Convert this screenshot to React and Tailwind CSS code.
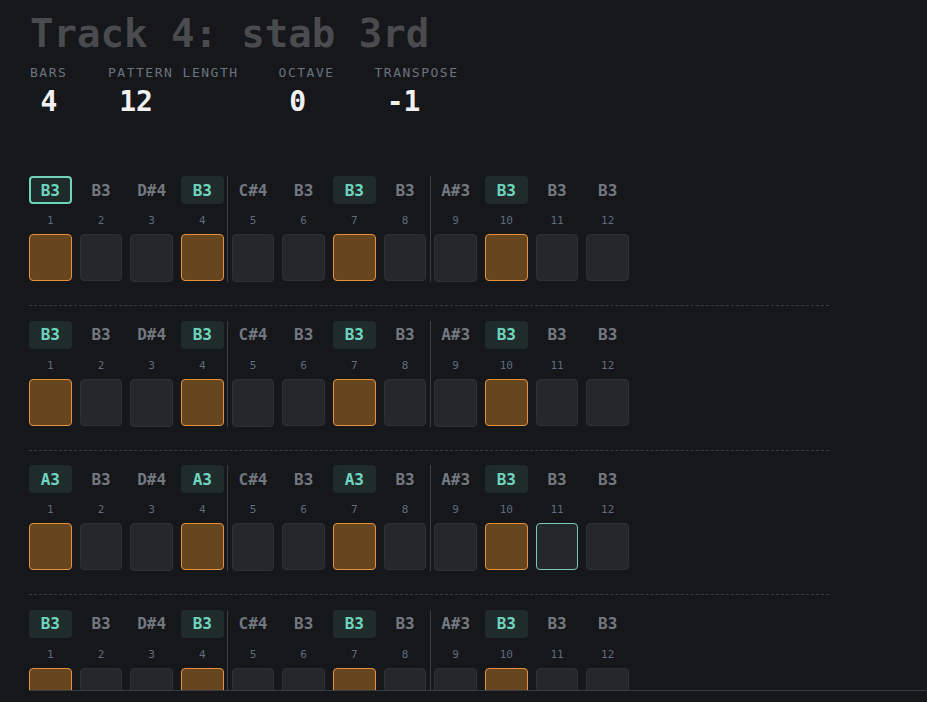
import React from "react";

const baseNotes = ["B3", "B3", "D#4", "B3", "C#4", "B3", "B3", "B3", "A#3", "B3", "B3", "B3"];
const altNotes = ["A3", "B3", "D#4", "A3", "C#4", "B3", "A3", "B3", "A#3", "B3", "B3", "B3"];

const rows = [
  { notes: baseNotes, selectedChip: 0, cursor: -1 },
  { notes: baseNotes, selectedChip: -1, cursor: -1 },
  { notes: altNotes, selectedChip: -1, cursor: 10 },
  { notes: baseNotes, selectedChip: -1, cursor: -1 },
];

const activeSteps = [0, 3, 6, 9];
const changedSteps = [2, 4, 8];

const params = [
  { label: "BARS", value: "4", w: "w-[38px]" },
  { label: "PATTERN LENGTH", value: "12", w: "w-[56px]" },
  { label: "OCTAVE", value: "0", w: "w-[38px]" },
  { label: "TRANSPOSE", value: "-1", w: "w-[58px]" },
];

function Step({ note, index, selected, cursor }) {
  const accent = activeSteps.includes(index);
  const tall = changedSteps.includes(index);
  let chip = "text-[#737880]";
  if (selected) chip = "border-2 border-[#6dd3bb] bg-[#1e2b2a] text-[#6fd6bf]";
  else if (accent) chip = "bg-[#1f2c2b] text-[#6fd6bf]";

  let cell = "bg-[#24272b] border-[#2d3035]";
  if (accent) cell = "bg-[#65461f] border-[#e8913c]";
  if (cursor) cell = "bg-[#24272b] border-[#7ccab5]";

  return (
    <div className="flex-1 flex flex-col min-w-0">
      <div className={`h-[28px] rounded-[4px] flex items-center justify-center pt-px text-[16px] font-bold ${chip}`}>
        {note}
      </div>
      <div className="mt-[10px] h-[14px] leading-[14px] text-[11px] text-center text-[#5e6c7c]">{index + 1}</div>
      <div className={`mt-[6px] rounded-[4px] border ${tall ? "h-[48px]" : "h-[47px]"} ${cell}`} />
    </div>
  );
}

function Bar({ row, start }) {
  return (
    <div className="flex-1 flex gap-[8px]">
      {[0, 1, 2, 3].map((k) => {
        const i = start + k;
        return (
          <Step
            key={i}
            note={row.notes[i]}
            index={i}
            selected={row.selectedChip === i}
            cursor={row.cursor === i}
          />
        );
      })}
    </div>
  );
}

function PatternRow({ row, first }) {
  return (
    <div className={`w-[800px] border-b border-dashed border-[#393c41] pb-[23px] ${first ? "" : "pt-[14.5px]"}`}>
      <div className="w-[600px] flex">
        <Bar row={row} start={0} />
        <div className="w-px mx-[3.5px] bg-[#3a3d42] self-stretch" />
        <Bar row={row} start={4} />
        <div className="w-px mx-[3.5px] bg-[#3a3d42] self-stretch" />
        <Bar row={row} start={8} />
      </div>
    </div>
  );
}

export default function App() {
  return (
    <div className="w-full h-[702px] overflow-hidden bg-[#16171b] pl-[29px] font-['DejaVu_Sans_Mono','Liberation_Mono',monospace]">
      <header className="pt-[14px]">
        <h1 className="pl-px text-[39px] leading-none font-bold text-[#4a4b4e]">Track 4: stab 3rd</h1>
        <div className="mt-[13px] flex gap-10 pl-px">
          {params.map((p) => (
            <div key={p.label} className="flex flex-col items-start">
              <span className="text-[13px] leading-none tracking-[1.5px] text-[#6b737d]">{p.label}</span>
              <span className={`mt-[9px] ${p.w} text-center text-[28px] leading-none font-bold text-[#f1f1f1]`}>
                {p.value}
              </span>
            </div>
          ))}
        </div>
      </header>
      <section className="mt-0 pt-[60px] h-[575px] overflow-hidden border-b border-[#3a3d42]">
        {rows.map((row, i) => (
          <PatternRow key={i} row={row} first={i === 0} />
        ))}
      </section>
    </div>
  );
}
